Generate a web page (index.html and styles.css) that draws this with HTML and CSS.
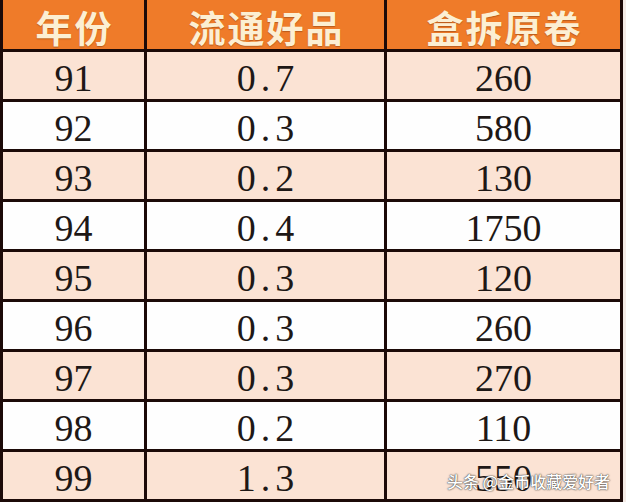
FILE: index.html
```html
<!DOCTYPE html>
<html lang="zh">
<head>
<meta charset="utf-8">
<title>年份 流通好品 盒拆原卷</title>
<link rel="stylesheet" href="styles.css">
</head>
<body>
<div class="sheet">
  <div class="table">
    <div class="th">年份</div>
    <div class="th">流通好品</div>
    <div class="th">盒拆原卷</div>

    <div class="td odd">91</div><div class="td odd dec">0.7</div><div class="td odd">260</div>
    <div class="td">92</div><div class="td dec">0.3</div><div class="td">580</div>
    <div class="td odd">93</div><div class="td odd dec">0.2</div><div class="td odd">130</div>
    <div class="td">94</div><div class="td dec">0.4</div><div class="td">1750</div>
    <div class="td odd">95</div><div class="td odd dec">0.3</div><div class="td odd">120</div>
    <div class="td">96</div><div class="td dec">0.3</div><div class="td">260</div>
    <div class="td odd">97</div><div class="td odd dec">0.3</div><div class="td odd">270</div>
    <div class="td">98</div><div class="td dec">0.2</div><div class="td">110</div>
    <div class="td odd">99</div><div class="td odd dec">1.3</div><div class="td odd">550</div>
  </div>
  <div class="watermark">头条 @金币收藏爱好者</div>
</div>
</body>
</html>
```

FILE: styles.css
```css
html, body {
  margin: 0;
  padding: 0;
  background: #f4ebe6;
}

.sheet {
  position: relative;
  width: 626px;
  height: 502px;
  overflow: hidden;
}

.table {
  width: 623px;
  height: 502px;
  box-sizing: border-box;
  display: grid;
  grid-template-columns: 141px 237px 233px;
  grid-template-rows: 49px repeat(9, 47px);
  column-gap: 3px;
  row-gap: 3px;
  padding: 0 3px 3px 3px;
  background: #1c0a08;
}

.th {
  background: #ef7b29;
  color: #fcefd3;
  font-family: "Noto Sans CJK SC", "Noto Sans", sans-serif;
  font-weight: 700;
  font-size: 37px;
  letter-spacing: 2px;
  padding-left: 2px;
  padding-top: 6px;
  box-sizing: border-box;
  display: flex;
  align-items: center;
  justify-content: center;
  text-shadow: 0 1px 1px rgba(120, 50, 10, 0.45);
  line-height: 1;
}

.td {
  background: #fefefe;
  color: #1e1816;
  font-family: "Liberation Serif", "DejaVu Serif", serif;
  font-size: 38px;
  display: flex;
  align-items: center;
  justify-content: center;
  padding-top: 5px;
  box-sizing: border-box;
  line-height: 1;
}

.td.odd {
  background: #fbe3d4;
}

.td.dec {
  letter-spacing: 5px;
  padding-left: 5px;
}

.watermark {
  position: absolute;
  left: 447px;
  top: 469px;
  font-family: "Noto Sans CJK SC", "Noto Sans", sans-serif;
  font-size: 16px;
  font-weight: 500;
  color: #ffffff;
  white-space: nowrap;
  text-shadow: 0 0 1px #333, 0 0 2px rgba(0, 0, 0, 0.7);
}
```
